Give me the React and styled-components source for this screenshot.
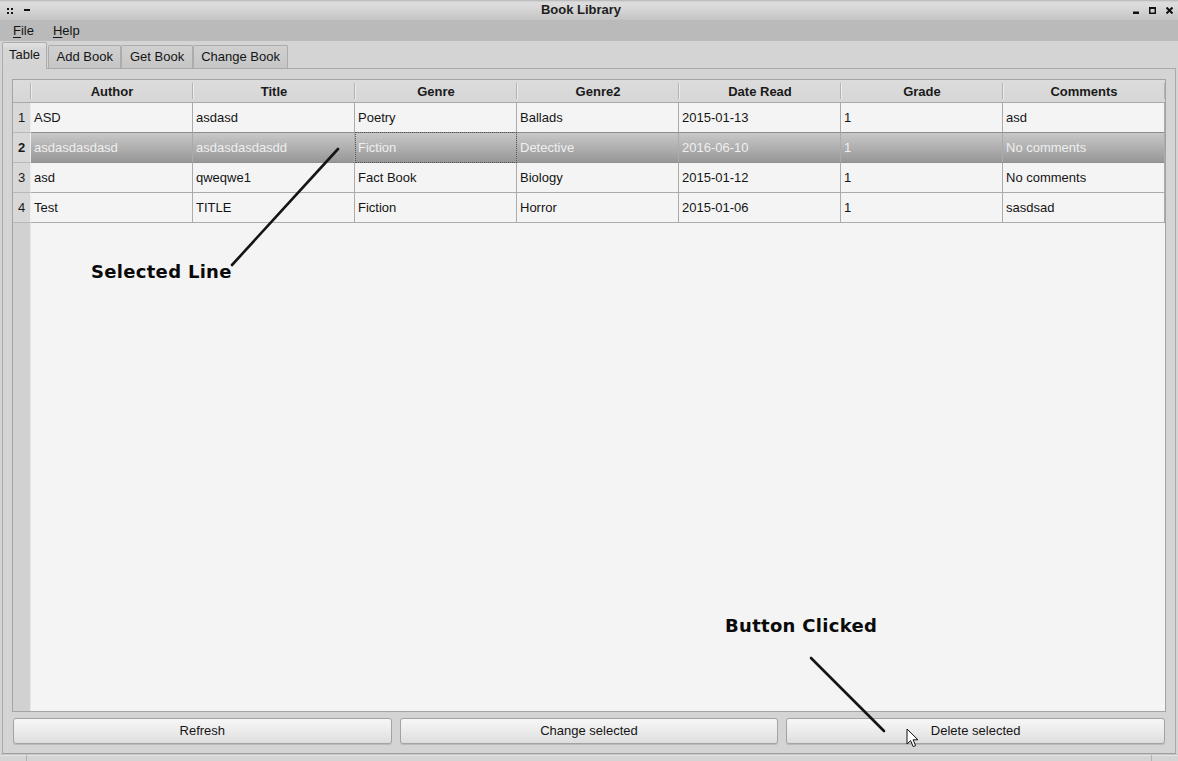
import React from 'react';
import styled, { createGlobalStyle, css } from 'styled-components';

const GlobalStyle = createGlobalStyle`
  * { box-sizing: border-box; }
  html, body { margin: 0; padding: 0; background: #d4d4d4; }
  body {
    font-family: "Liberation Sans", Arial, sans-serif;
    font-size: 13px;
    color: #151515;
  }
`;

const columns = ['Author', 'Title', 'Genre', 'Genre2', 'Date Read', 'Grade', 'Comments'];
const rows = [
  ['ASD', 'asdasd', 'Poetry', 'Ballads', '2015-01-13', '1', 'asd'],
  ['asdasdasdasd', 'asdasdasdasdd', 'Fiction', 'Detective', '2016-06-10', '1', 'No comments'],
  ['asd', 'qweqwe1', 'Fact Book', 'Biology', '2015-01-12', '1', 'No comments'],
  ['Test', 'TITLE', 'Fiction', 'Horror', '2015-01-06', '1', 'sasdsad'],
];
const SELECTED = 1;
const FOCUS_COL = 2;
const GRID = '18px repeat(7, 162px)';

const Window = styled.div`
  position: relative;
  width: 1178px;
  height: 761px;
  display: flex;
  flex-direction: column;
  background: #d4d4d4;
  overflow: hidden;
`;

const TitleBar = styled.div`
  height: 20px;
  flex: none;
  display: grid;
  grid-template-columns: 44px 1fr 60px;
  align-items: center;
  background: linear-gradient(#d0d0d0 0px, #dedede 2px, #d3d3d3 10px, #c2c2c2 20px);
  border-top: 1px solid #bdbdbd;
`;

const TitleText = styled.div`
  text-align: center;
  font-weight: bold;
  font-size: 13px;
  color: #1e1e1e;
  line-height: 17px;
  margin-bottom: 2px;
`;

const TitleIcons = styled.div`
  display: flex;
  align-items: center;
  gap: ${(p) => p.$gap}px;
  padding-left: ${(p) => p.$pl}px;
  height: 19px;
`;

const MenuBar = styled.div`
  height: 21px;
  flex: none;
  display: flex;
  align-items: center;
  padding-left: 4px;
  background: #bababa;
`;

const MenuItem = styled.div`
  padding: 0 9px;
  margin-right: 1px;
  color: #151515;
  line-height: 21px;
  & u { text-decoration: underline; text-underline-offset: 2px; }
`;

const TabBar = styled.div`
  height: 27px;
  flex: none;
  display: flex;
  align-items: flex-end;
  padding-left: 2px;
  position: relative;
  z-index: 1;
`;

const Tab = styled.div`
  display: flex;
  align-items: center;
  justify-content: center;
  color: #151515;
  border: 1px solid #acacac;
  border-bottom: none;
  border-radius: 2px 2px 0 0;
  ${(p) =>
    p.$active
      ? css`
          height: 27px;
          margin-bottom: -1px;
          padding: 0 6px 3px 6px;
          background: linear-gradient(#e2e2e2, #d6d6d6 6px, #d4d4d4);
          margin-right: 1px;
        `
      : css`
          height: 23px;
          padding: 0 7.5px 1px 7.5px;
          background: linear-gradient(#d0d0d0, #c6c6c6);
        `}
`;

const Pane = styled.div`
  flex: 1;
  margin: 0 2px;
  border: 1px solid #a9a9a9;
  border-bottom-color: #a0a0a0;
  padding: 10px 9px 9px 9px;
  display: flex;
  flex-direction: column;
  min-height: 0;
`;

const Table = styled.div`
  flex: 1;
  border: 1px solid #a4a4a4;
  background: linear-gradient(to right, #d1d1d1 17px, #e6e6e6 17px, #e6e6e6 18px, #f4f4f4 18px);
  display: flex;
  flex-direction: column;
  overflow: hidden;
`;

const HeaderRow = styled.div`
  display: grid;
  grid-template-columns: ${GRID};
  height: 23px;
  background: linear-gradient(#dcdcdc, #d6d6d6);
  border-bottom: 1px solid #a9a9a9;
`;

const HeaderCell = styled.div`
  position: relative;
  display: flex;
  align-items: center;
  justify-content: center;
  font-weight: bold;
  color: #1a1a1a;
  &::after {
    content: '';
    position: absolute;
    right: 0;
    top: 3px;
    bottom: 3px;
    width: 1px;
    background: #b3b3b3;
    box-shadow: 1px 0 0 #ececec;
  }
`;

const Row = styled.div`
  display: grid;
  grid-template-columns: ${GRID};
  height: 30px;
`;

const RowNumber = styled.div`
  display: flex;
  align-items: center;
  justify-content: center;
  background: #d8d8d8;
  border-bottom: 1px solid #b8b8b8;
  border-right: 1px solid #ececec;
  color: #1a1a1a;
  font-weight: ${(p) => (p.$selected ? 'bold' : 'normal')};
`;

const Cell = styled.div`
  display: flex;
  align-items: center;
  padding: 0 3px;
  white-space: nowrap;
  overflow: hidden;
  border-right: 1px solid #ababab;
  border-bottom: 1px solid #ababab;
  color: #151515;
  ${(p) =>
    p.$selected &&
    css`
      color: #efefef;
      background: linear-gradient(#c8c8c8, #b0b0b0 50%, #979797);
      border-bottom-color: #8f8f8f;
      border-top: 1px solid #8d8d8d;
      margin-top: -1px;
    `}
  ${(p) =>
    p.$focus &&
    css`
      outline: 1px dotted #555;
      outline-offset: -1px;
    `}
`;

const ButtonRow = styled.div`
  flex: none;
  display: grid;
  grid-template-columns: repeat(3, 1fr);
  gap: 8px;
  padding: 0 1px;
  margin-top: 6px;
  height: 26px;
`;

const Button = styled.button`
  font-family: "Liberation Sans", Arial, sans-serif;
  font-size: 13px;
  color: #151515;
  border: 1px solid #a3a3a3;
  border-radius: 3px;
  background: linear-gradient(#f7f7f7, #e9e9e9 60%, #dddddd);
  box-shadow: 0 1px 0 rgba(0, 0, 0, 0.12);
  padding: 0 0 2px 0;
`;

const StatusBar = styled.div`
  height: 7px;
  flex: none;
  display: flex;
  border-top: 1px solid #c4c4c4;
`;

const StatusCell = styled.div`
  width: ${(p) => (p.$w ? `${p.$w}px` : 'auto')};
  flex: ${(p) => (p.$w ? 'none' : '1')};
  border-right: 1px solid #b2b2b2;
  box-shadow: inset 0 1px 0 #e4e4e4;
  &:last-child { border-right: none; }
`;

const Overlay = styled.svg`
  position: absolute;
  inset: 0;
  pointer-events: none;
`;

const Label = styled.div`
  position: absolute;
  left: ${(p) => p.$x}px;
  top: ${(p) => p.$y}px;
  font-family: "DejaVu Sans", sans-serif;
  font-weight: bold;
  font-size: 18px;
  line-height: 18px;
  color: #0a0a0a;
  letter-spacing: 0.3px;
  white-space: nowrap;
  pointer-events: none;
`;

const Cursor = styled.svg`
  position: absolute;
  left: 906px;
  top: 728px;
  pointer-events: none;
`;

export default function App() {
  return (
    <>
      <GlobalStyle />
      <Window>
        <TitleBar>
          <TitleIcons $gap={11} $pl={7}>
            <svg width="6" height="6" viewBox="0 0 6 6">
              <rect x="0" y="0" width="2" height="2" fill="#111" />
              <rect x="4" y="0" width="2" height="2" fill="#111" />
              <rect x="0" y="4" width="2" height="2" fill="#111" />
              <rect x="4" y="4" width="2" height="2" fill="#111" />
            </svg>
            <svg width="6" height="8" viewBox="0 0 6 8" style={{ marginTop: -7 }}>
              <rect x="0" y="6" width="6" height="2" fill="#111" />
            </svg>
          </TitleIcons>
          <TitleText>Book Library</TitleText>
          <TitleIcons $gap={10} $pl={15}>
            <svg width="6" height="7" viewBox="0 0 6 7">
              <rect x="0" y="4.5" width="6" height="2.5" fill="#111" />
            </svg>
            <svg width="7" height="7" viewBox="0 0 7 7">
              <rect x="0.75" y="1" width="5.5" height="5.25" fill="none" stroke="#111" strokeWidth="1.5" />
              <rect x="0" y="0" width="7" height="2" fill="#111" />
            </svg>
            <svg width="7" height="7" viewBox="0 0 7 7">
              <path d="M0.5 0.5 L6.5 6.5 M6.5 0.5 L0.5 6.5" stroke="#111" strokeWidth="2" />
            </svg>
          </TitleIcons>
        </TitleBar>
        <MenuBar>
          <MenuItem><u>F</u>ile</MenuItem>
          <MenuItem><u>H</u>elp</MenuItem>
        </MenuBar>
        <TabBar>
          <Tab $active>Table</Tab>
          <Tab>Add Book</Tab>
          <Tab>Get Book</Tab>
          <Tab>Change Book</Tab>
        </TabBar>
        <Pane>
          <Table>
            <HeaderRow>
              <HeaderCell />
              {columns.map((c) => (
                <HeaderCell key={c}>{c}</HeaderCell>
              ))}
            </HeaderRow>
            {rows.map((r, i) => (
              <Row key={i}>
                <RowNumber $selected={i === SELECTED}>{i + 1}</RowNumber>
                {r.map((v, j) => (
                  <Cell key={j} $selected={i === SELECTED} $focus={i === SELECTED && j === FOCUS_COL}>
                    {v}
                  </Cell>
                ))}
              </Row>
            ))}
          </Table>
          <ButtonRow>
            <Button>Refresh</Button>
            <Button>Change selected</Button>
            <Button>Delete selected</Button>
          </ButtonRow>
        </Pane>
        <StatusBar>
          <StatusCell $w={27} />
          <StatusCell />
          <StatusCell $w={26} />
        </StatusBar>

        <Overlay width="1178" height="761" viewBox="0 0 1178 761">
          <line x1="232" y1="265" x2="338" y2="149" stroke="#151515" strokeWidth="2.6" strokeLinecap="round" />
          <line x1="811" y1="658" x2="884" y2="731" stroke="#151515" strokeWidth="2.6" strokeLinecap="round" />
        </Overlay>
        <Label $x={91} $y={263}>Selected Line</Label>
        <Label $x={725} $y={617}>Button Clicked</Label>
        <Cursor width="14" height="21" viewBox="0 0 14 21">
          <path d="M1 1 L1 16 L4.6 12.6 L7.2 18.6 L9.6 17.6 L7.1 11.8 L12 11.8 Z" fill="#fff" stroke="#111" strokeWidth="1" strokeLinejoin="miter" />
        </Cursor>
      </Window>
    </>
  );
}
